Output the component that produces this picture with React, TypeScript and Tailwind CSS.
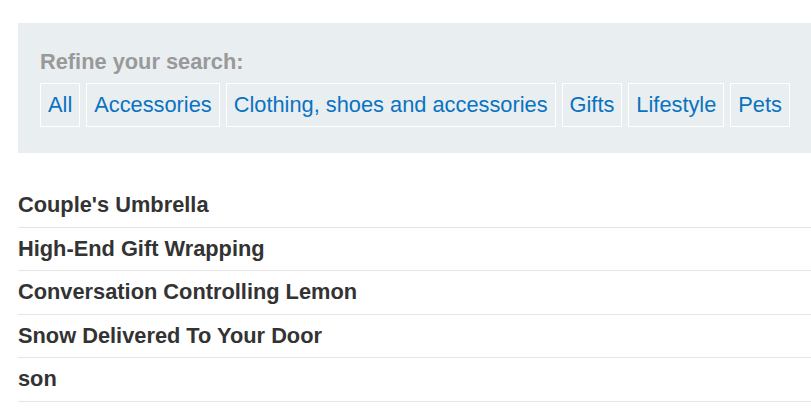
import React from "react";

const tags = ["All", "Accessories", "Clothing, shoes and accessories", "Gifts", "Lifestyle", "Pets"];
const items = ["Couple's Umbrella", "High-End Gift Wrapping", "Conversation Controlling Lemon", "Snow Delivered To Your Door", "son"];

export default function App() {
  return (
    <div className="min-h-[413px] bg-white pt-[23px] pl-[18px] font-['Liberation_Sans',Arial,sans-serif] text-[21.8px]">
      <div className="bg-[#e9eef1] pt-[25px] pb-[26px] pl-[22px] pr-[10px]">
        <div className="font-bold text-[#999999] leading-[27px] mb-[8px]">Refine your search:</div>
        <div className="flex flex-wrap gap-[6px]">
          {tags.map((t) => (
            <a key={t} href="#" className="border border-white px-[7px] py-[7px] leading-[28px] text-[#0a73c1] no-underline">
              {t}
            </a>
          ))}
        </div>
      </div>
      <ul className="mt-[31px]">
        {items.map((i) => (
          <li key={i} className="border-b border-[#e5e5e5] pt-[8px] pb-[8px] leading-[26.6px] font-bold text-[#333333]">
            {i}
          </li>
        ))}
      </ul>
    </div>
  );
}
